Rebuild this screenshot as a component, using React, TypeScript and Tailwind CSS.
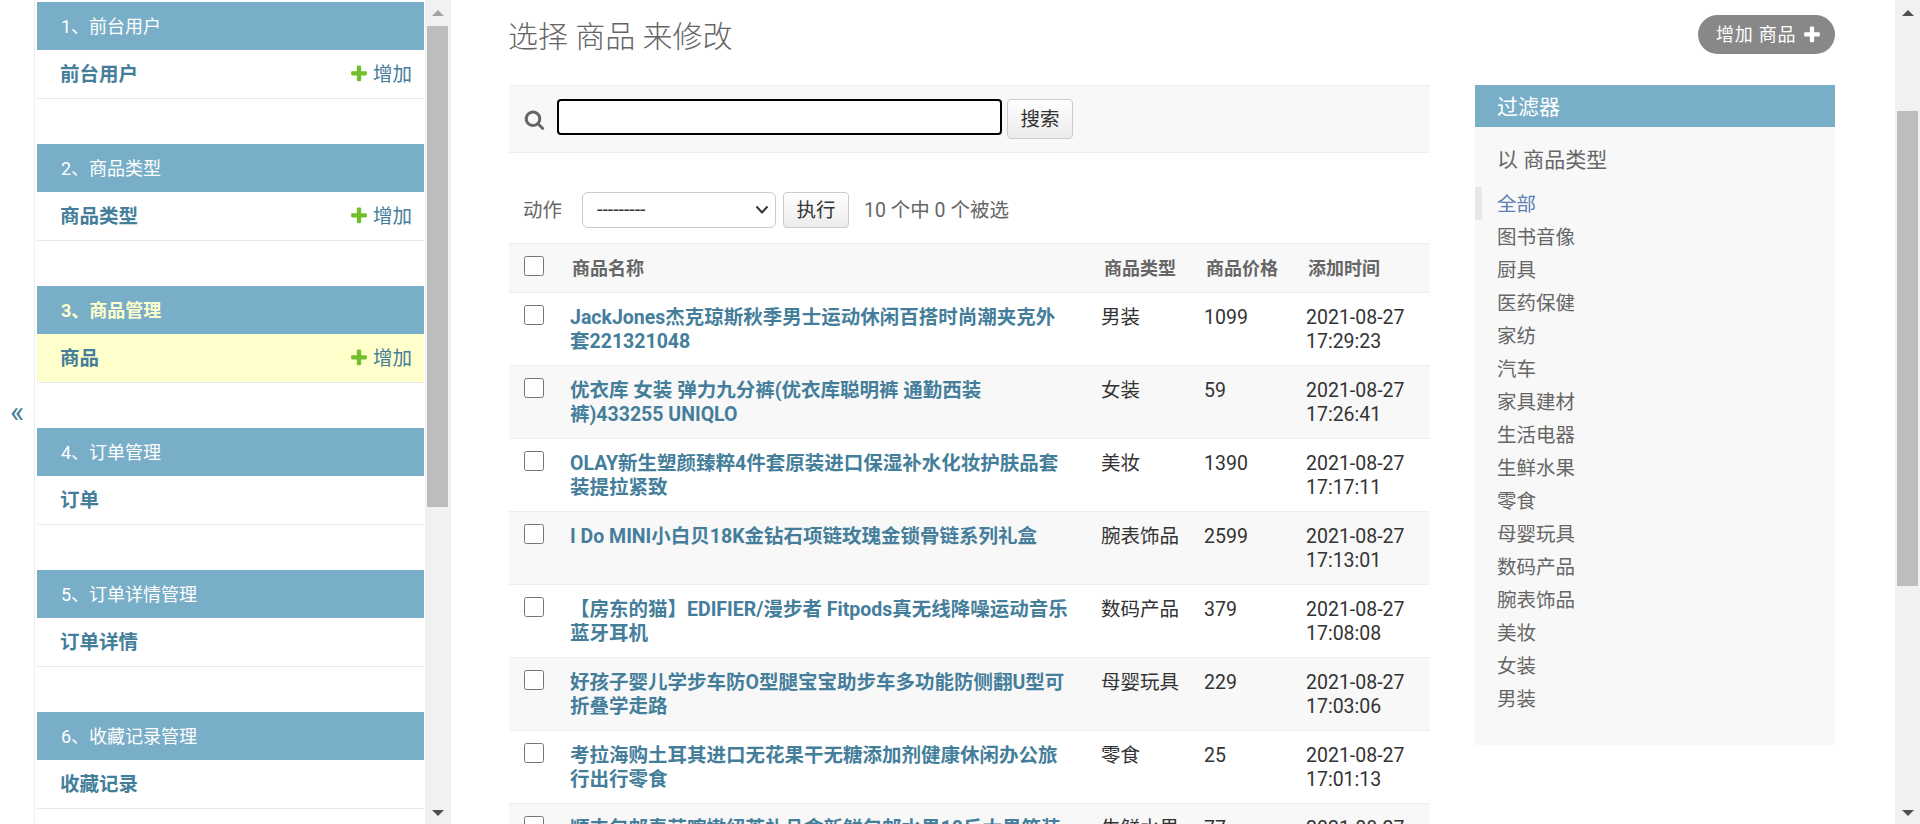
import React from 'react';

const PLUS =
  'M1600 736v192q0 40-28 68t-68 28h-416v416q0 40-28 68t-68 28h-192q-40 0-68-28t-28-68v-416h-416q-40 0-68-28t-28-68v-192q0-40 28-68t68-28h416v-416q0-40 28-68t68-28h192q40 0 68 28t28 68v416h416q40 0 68 28t28 68z';
const SEARCH =
  'M1216 832q0-185-131.5-316.5t-316.5-131.5-316.5 131.5-131.5 316.5 131.5 316.5 316.5 131.5 316.5-131.5 131.5-316.5zm512 832q0 52-38 90t-90 38q-54 0-90-38l-343-342q-179 124-399 124-143 0-273.5-55.5t-225-150-150-225-55.5-273.5 55.5-273.5 150-225 225-150 273.5-55.5 273.5 55.5 225 150 150 225 55.5 273.5q0 220-124 399l343 343q37 37 37 90z';

const sections = [
  { caption: '1、前台用户', model: '前台用户', add: true },
  { caption: '2、商品类型', model: '商品类型', add: true },
  { caption: '3、商品管理', model: '商品', add: true, current: true },
  { caption: '4、订单管理', model: '订单' },
  { caption: '5、订单详情管理', model: '订单详情' },
  { caption: '6、收藏记录管理', model: '收藏记录' },
];

const products = [
  { name: 'JackJones杰克琼斯秋季男士运动休闲百搭时尚潮夹克外套221321048', type: '男装', price: '1099', time: '17:29:23' },
  { name: '优衣库 女装 弹力九分裤(优衣库聪明裤 通勤西装裤)433255 UNIQLO', type: '女装', price: '59', time: '17:26:41' },
  { name: 'OLAY新生塑颜臻粹4件套原装进口保湿补水化妆护肤品套装提拉紧致', type: '美妆', price: '1390', time: '17:17:11' },
  { name: 'I Do MINI小白贝18K金钻石项链玫瑰金锁骨链系列礼盒', type: '腕表饰品', price: '2599', time: '17:13:01' },
  { name: '【房东的猫】EDIFIER/漫步者 Fitpods真无线降噪运动音乐蓝牙耳机', type: '数码产品', price: '379', time: '17:08:08' },
  { name: '好孩子婴儿学步车防O型腿宝宝助步车多功能防侧翻U型可折叠学走路', type: '母婴玩具', price: '229', time: '17:03:06' },
  { name: '考拉海购土耳其进口无花果干无糖添加剂健康休闲办公旅行出行零食', type: '零食', price: '25', time: '17:01:13' },
  { name: '顺丰包邮泰芸喀嫩纽荟礼品盒新鲜包邮水果10斤大果箱装', type: '生鲜水果', price: '77', time: '17:00:00' },
];

const categories = ['图书音像', '厨具', '医药保健', '家纺', '汽车', '家具建材', '生活电器', '生鲜水果', '零食', '母婴玩具', '数码产品', '腕表饰品', '美妆', '女装', '男装'];

function Scrollbar({ thumbGap, thumbHeight, topArrow }: { thumbGap: string; thumbHeight: string; topArrow: string }) {
  return (
    <div className="flex h-full w-[25px] shrink-0 flex-col items-center bg-[#f1f1f1]">
      <div className={`mt-[10px] h-0 w-0 border-x-[6px] border-b-[6px] border-x-transparent ${topArrow}`} />
      <div className={`w-[21px] bg-[#bdbdbd] ${thumbGap} ${thumbHeight}`} />
      <div className="flex-1" />
      <div className="mb-[8px] h-0 w-0 border-x-[6px] border-t-[6px] border-x-transparent border-t-[#505050]" />
    </div>
  );
}

function Nav() {
  return (
    <div className="flex h-full w-[416px] shrink-0 border-r border-[#eee]">
      <div className="w-[390px] shrink-0 overflow-hidden pl-[2px] pt-[2px]">
        {sections.map((s) => (
          <div key={s.caption} className="mb-[45px] w-[387px]">
            <div className={`h-[48px] bg-[#79aec8] pl-[24px] text-[18px] leading-[50px] ${s.current ? 'font-bold text-[#ffc]' : 'text-white'}`}>
              {s.caption}
            </div>
            <div className={`flex h-[49px] items-center justify-between border-b border-[#e8e8e8] pl-[23px] pr-[12px] pt-[2px] text-[19.5px] text-[#447e9b] ${s.current ? 'bg-[#ffc]' : 'bg-white'}`}>
              <span className="font-bold">{s.model}</span>
              {s.add && (
                <span className="flex items-center gap-[4px]">
                  <svg viewBox="0 0 1792 1792" className="mb-[3px] h-[20px] w-[20px] fill-[#70bf2b]">
                    <path d={PLUS} />
                  </svg>
                  增加
                </span>
              )}
            </div>
          </div>
        ))}
      </div>
      <Scrollbar thumbGap="mt-[10px]" thumbHeight="h-[481px]" topArrow="border-b-[#a3a3a3]" />
    </div>
  );
}

function ChangeList() {
  return (
    <div className="w-[921px] shrink-0">
      <div className="flex h-[68px] items-start border-y border-[#eee] bg-[#f8f8f8] pl-[15px] pt-[13px]">
        <svg viewBox="0 0 1792 1792" className="mt-[10px] h-[21px] w-[21px] fill-[#666]">
          <path d={SEARCH} />
        </svg>
        <input className="ml-[12px] h-[36px] w-[445px] rounded-[4px] border-2 border-black bg-white" />
        <button className="ml-[5px] h-[40px] w-[66px] rounded-[4px] border border-[#ccc] bg-linear-to-b from-white to-[#ececec] pt-[2px] text-[19.5px] text-[#333]">
          搜索
        </button>
      </div>

      <div className="flex h-[90px] items-start pl-[14px] pt-[39px] text-[19.5px] text-[#666]">
        <span className="w-[59px] leading-[38px]">动作</span>
        <div className="relative h-[36px] w-[194px]">
          <select className="h-[36px] w-[194px] appearance-none rounded-[6px] border border-[#ccc] bg-white pl-[14px] text-[19.5px] text-[#333]">
            <option>---------</option>
          </select>
          <svg viewBox="0 0 14 10" className="absolute right-[7px] top-[13px] h-[10px] w-[14px] fill-none stroke-[#333] stroke-2">
            <path d="M1.5 1.5 7 7.5l5.5-6" />
          </svg>
        </div>
        <button className="ml-[7px] h-[36px] w-[66px] rounded-[4px] border border-[#ccc] bg-linear-to-b from-white to-[#ececec] pt-[2px] text-[#333]">
          执行
        </button>
        <span className="ml-[15px] leading-[38px]">10 个中 0 个被选</span>
      </div>

      <table className="w-full table-fixed border-separate border-spacing-0">
        <colgroup>
          <col className="w-[49px]" />
          <col className="w-[531px]" />
          <col className="w-[103px]" />
          <col className="w-[102px]" />
          <col className="w-[136px]" />
        </colgroup>
        <thead>
          <tr className="bg-[#f8f8f8] text-left text-[18px] font-bold text-[#666]">
            <th className="h-[50px] border-y border-[#eee] pb-[11px] pl-[15px] pt-[12px] align-top">
              <input type="checkbox" className="block h-[20px] w-[20px]" />
            </th>
            <th className="border-y border-[#eee] pl-[14px]">商品名称</th>
            <th className="border-y border-[#eee] pl-[15px]">商品类型</th>
            <th className="border-y border-[#eee] pl-[14px]">商品价格</th>
            <th className="border-y border-[#eee] pl-[14px]">添加时间</th>
          </tr>
        </thead>
        <tbody className="text-[19.5px] leading-[24px] text-[#333]">
          {products.map((p, i) => (
            <tr key={p.name} className={i % 2 ? 'bg-[#f8f8f8]' : 'bg-white'}>
              <td className="h-[73px] border-b border-[#eee] pl-[15px] pt-[12px] align-top">
                <input type="checkbox" className="block h-[20px] w-[20px]" />
              </td>
              <td className="border-b border-[#eee] pl-[12px] pr-[19px] pt-[13px] align-top font-bold text-[#447e9b]">{p.name}</td>
              <td className="border-b border-[#eee] pl-[12px] pt-[13px] align-top">{p.type}</td>
              <td className="border-b border-[#eee] pl-[12px] pt-[13px] align-top">{p.price}</td>
              <td className="border-b border-[#eee] pl-[12px] pr-[12px] pt-[13px] align-top">2021-08-27 {p.time}</td>
            </tr>
          ))}
        </tbody>
      </table>
    </div>
  );
}

function Filter() {
  return (
    <div className="h-[660px] w-[360px] shrink-0 bg-[#f8f8f8] text-[#666]">
      <div className="h-[42px] bg-[#79aec8] pl-[22px] text-[21px] leading-[44px] text-white">过滤器</div>
      <div className="mb-[11px] mt-[17px] pl-[22px] text-[21px] leading-[32px]">以 商品类型</div>
      <ul className="text-[19.5px] leading-[35px]">
        <li className="h-[33px] border-l-[7px] border-[#e8e8e8] pl-[15px] text-[#5b80b2]">全部</li>
        {categories.map((c) => (
          <li key={c} className="h-[33px] pl-[22px]">
            {c}
          </li>
        ))}
      </ul>
    </div>
  );
}

export default function App() {
  return (
    <div className="flex h-screen w-screen overflow-hidden bg-white font-[Roboto,'Noto_Sans_CJK_SC',sans-serif]">
      <div className="flex h-full w-[35px] shrink-0 items-center justify-center border-r border-[#eee] pb-[2px] text-[30px] text-[#447e9b]">
        «
      </div>
      <Nav />
      <div className="h-full min-w-0 flex-1 overflow-hidden pl-[58px] pr-[60px] pt-[15px]">
        <div className="flex h-[70px] items-start justify-between">
          <h1 className="-ml-[1px] text-[30px] font-light leading-[44px] text-[#666]">选择 商品 来修改</h1>
          <a className="flex h-[39px] w-[137px] items-center gap-[6px] rounded-[20px] bg-[#888] pl-[18px] text-[18px] tracking-[0.75px] text-white">
            增加 商品
            <svg viewBox="0 0 1792 1792" className="h-[20px] w-[20px] fill-white">
              <path d={PLUS} />
            </svg>
          </a>
        </div>
        <div className="flex justify-between">
          <ChangeList />
          <Filter />
        </div>
      </div>
      <Scrollbar thumbGap="mt-[95px]" thumbHeight="h-[475px]" topArrow="border-b-[#505050]" />
    </div>
  );
}
